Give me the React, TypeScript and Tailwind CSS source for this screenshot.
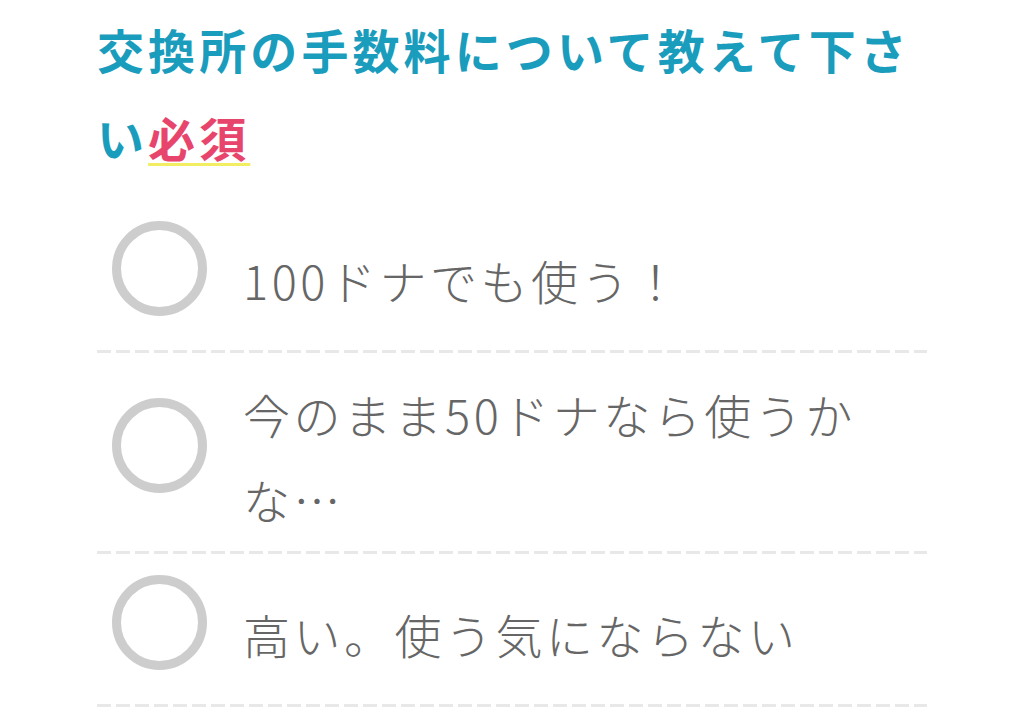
import React from 'react'

const OPTIONS: string[] = [
  '100ドナでも使う！',
  '今のまま50ドナなら使うかな…',
  '高い。使う気にならない',
]

function RadioRing() {
  return (
    <span className="block w-[95px] h-[95px] shrink-0 rounded-full border-[9px] border-[#cdcdcd] bg-white mb-[13px]" />
  )
}

function Divider() {
  return (
    <div className="h-[3px] w-full bg-[repeating-linear-gradient(to_right,#e8e8e8_0_14px,transparent_14px_19px)]" />
  )
}

export default function App() {
  return (
    <div
      className="w-[1024px] h-[720px] overflow-hidden bg-white"
      style={{ fontFamily: '"Noto Sans CJK JP", "Noto Sans", sans-serif' }}
    >
      <div className="ml-[97px] w-[830px] pt-[5px]">
        <h2 className="text-[47px] leading-[88px] font-bold tracking-[4.1px] text-[#1a9cbd]">
          交換所の手数料について教えて下さい
          <span className="text-[#e8456c] underline decoration-[#f2ee63] decoration-[3px] underline-offset-[6px]">必須</span>
        </h2>

        <ul className="mt-[19px]">
          {OPTIONS.map(o => (
            <li key={o}>
              <label className="flex items-center min-h-[150px] py-[10px] pl-[15px] pr-[37px] gap-[36px] cursor-pointer">
                <RadioRing />
                <span className="flex-1 pt-[8px] text-[47px] leading-[85px] font-light tracking-[3.5px] text-[#666666]">
                  {o}
                </span>
              </label>
              <Divider />
            </li>
          ))}
        </ul>
      </div>
    </div>
  )
}
